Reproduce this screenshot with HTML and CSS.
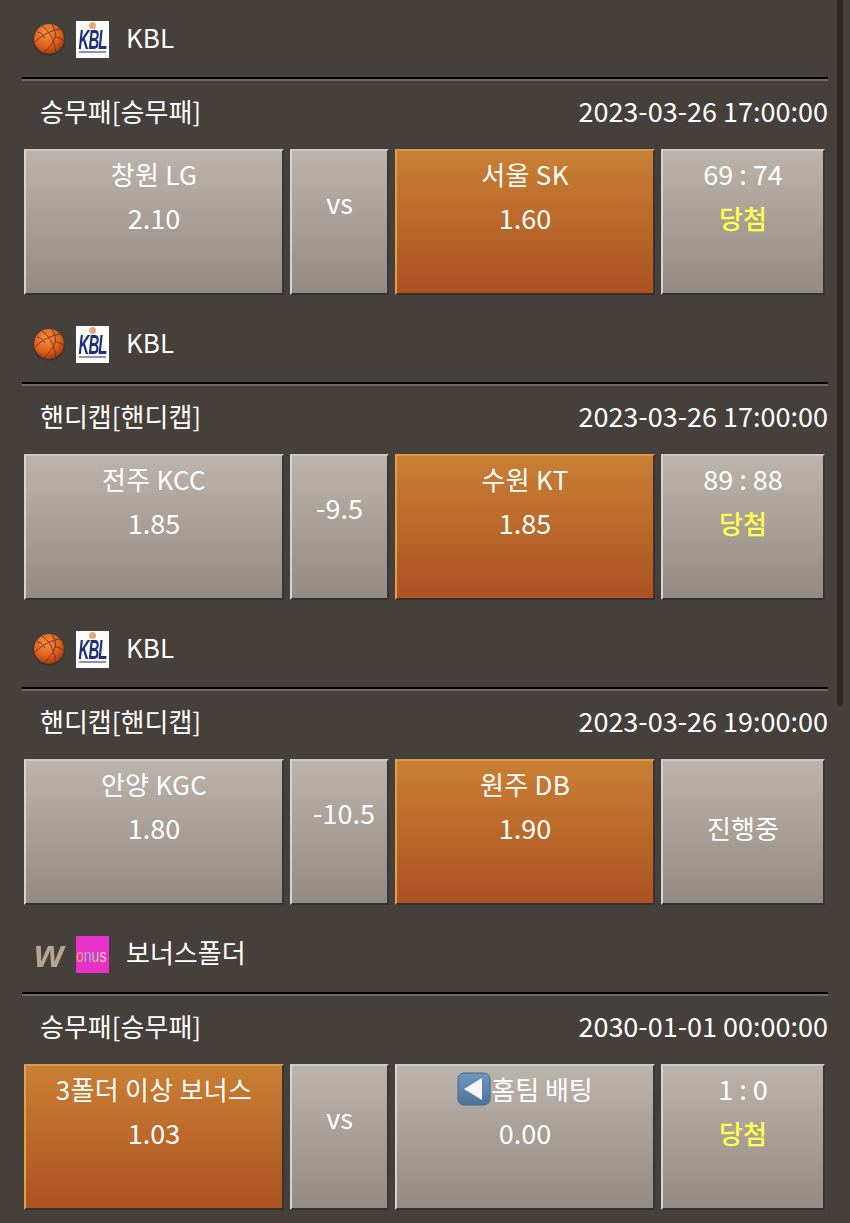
FILE: index.html
```html
<!DOCTYPE html>
<html lang="en">
<head>
    <meta charset="UTF-8">
    <meta name="viewport" content="width=device-width, initial-scale=1.0">
    <title>Betting history</title>
    <link rel="stylesheet" href="styles.css">
</head>
<body>
    <svg class="defs" width="0" height="0">
        <defs>
            <radialGradient id="ball" cx="42%" cy="32%" r="72%">
                <stop offset="0" stop-color="#f5914a"/>
                <stop offset="0.6" stop-color="#e0601c"/>
                <stop offset="1" stop-color="#96380f"/>
            </radialGradient>
            <linearGradient id="backfill" x1="0" y1="0" x2="0" y2="1">
                <stop offset="0" stop-color="#7097c0"/>
                <stop offset="1" stop-color="#4f719a"/>
            </linearGradient>
            <symbol id="basketball" viewBox="0 0 32 32">
                <circle cx="16" cy="16" r="15" fill="url(#ball)"/>
                <path d="M2 19C10 11 20 7 27 6M9 3c6 4 12 12 14 26M19 1.500c3 5 4 9 3 13s-5 10-11 15M4 9c3 0 6 2 8 6M22 14c3 0 6 1 9 4" fill="none" stroke="#6b3014" stroke-width="0.9"/>
            </symbol>
        </defs>
    </svg>

    <div class="scrollbar"></div>

    <section class="game">
        <div class="league">
            <svg class="sport"><use href="#basketball"/></svg>
            <div class="logo kbl"><span class="kbl-dot"></span><span class="kbl-text">KBL</span><span class="kbl-bar"></span></div>
            <span class="league-name">KBL</span>
        </div>
        <div class="info"><span>승무패[승무패]</span><span class="num">2023-03-26 17:00:00</span></div>
        <div class="odds">
            <div class="btn"><p class="team">창원 LG</p><p class="num">2.10</p></div>
            <div class="btn"><p class="mid">vs</p></div>
            <div class="btn picked"><p class="team">서울 SK</p><p class="num">1.60</p></div>
            <div class="btn"><p class="num">69 : 74</p><p class="win">당첨</p></div>
        </div>
    </section>

    <section class="game">
        <div class="league">
            <svg class="sport"><use href="#basketball"/></svg>
            <div class="logo kbl"><span class="kbl-dot"></span><span class="kbl-text">KBL</span><span class="kbl-bar"></span></div>
            <span class="league-name">KBL</span>
        </div>
        <div class="info"><span>핸디캡[핸디캡]</span><span class="num">2023-03-26 17:00:00</span></div>
        <div class="odds">
            <div class="btn"><p class="team">전주 KCC</p><p class="num">1.85</p></div>
            <div class="btn"><p class="mid">-9.5</p></div>
            <div class="btn picked"><p class="team">수원 KT</p><p class="num">1.85</p></div>
            <div class="btn"><p class="num">89 : 88</p><p class="win">당첨</p></div>
        </div>
    </section>

    <section class="game">
        <div class="league">
            <svg class="sport"><use href="#basketball"/></svg>
            <div class="logo kbl"><span class="kbl-dot"></span><span class="kbl-text">KBL</span><span class="kbl-bar"></span></div>
            <span class="league-name">KBL</span>
        </div>
        <div class="info"><span>핸디캡[핸디캡]</span><span class="num">2023-03-26 19:00:00</span></div>
        <div class="odds">
            <div class="btn"><p class="team">안양 KGC</p><p class="num">1.80</p></div>
            <div class="btn"><p class="mid mid-wide">-10.5</p></div>
            <div class="btn picked"><p class="team">원주 DB</p><p class="num">1.90</p></div>
            <div class="btn center"><p>진행중</p></div>
        </div>
    </section>

    <section class="game">
        <div class="league">
            <span class="sport w-mark">w</span>
            <div class="logo bonus"><span class="c1">o</span><span class="c2">n</span><span class="c3">u</span><span class="c4">s</span></div>
            <span class="league-name">보너스폴더</span>
        </div>
        <div class="info"><span>승무패[승무패]</span><span class="num">2030-01-01 00:00:00</span></div>
        <div class="odds">
            <div class="btn picked"><p class="team">3폴더 이상 보너스</p><p class="num">1.03</p></div>
            <div class="btn"><p class="mid">vs</p></div>
            <div class="btn"><p class="home">
                <svg class="back" viewBox="0 0 34 34"><rect x="1" y="1" width="32" height="32" rx="6" fill="url(#backfill)" stroke="#46658c"/><path d="M25 6v22L7 17z" fill="#f4f6f8"/></svg>홈팀 배팅</p><p class="num">0.00</p></div>
            <div class="btn"><p class="num">1 : 0</p><p class="win">당첨</p></div>
        </div>
    </section>
</body>
</html>
```
FILE: styles.css
```css
body {
    margin: 0;
    height: 1223px;
    overflow: hidden;
    position: relative;
    background-color: #45403b;
    color: #fff;
    font-family: "Noto Sans CJK KR", "Noto Sans", sans-serif;
    font-size: 26px;
}
p {
    margin: 0;
}
.defs {
    position: absolute;
}
.scrollbar {
    position: absolute;
    top: -10px;
    left: 837px;
    width: 6px;
    height: 716px;
    border-radius: 3px;
    background-color: #2d2925;
}
.game {
    height: 305px;
    padding: 0 22px;
    box-sizing: border-box;
    width: 850px;
}
.league {
    height: 77px;
    display: flex;
    align-items: center;
    box-sizing: border-box;
    padding-left: 11px;
}
.sport {
    width: 32px;
    height: 32px;
    margin-right: 11px;
    flex-shrink: 0;
    filter: drop-shadow(0 1px 1px rgba(0,0,0,0.4));
}
.w-mark {
    font-family: "Liberation Sans", sans-serif;
    font-weight: bold;
    font-style: italic;
    font-size: 38px;
    line-height: 32px;
    color: #b9a68f;
    text-align: center;
    filter: blur(0.7px);
}
.logo {
    width: 33px;
    height: 37px;
    flex-shrink: 0;
    overflow: hidden;
    margin: 2px 17px 0 0;
}
.kbl {
    background-color: #fdfdfd;
    display: flex;
    flex-direction: column;
    align-items: center;
}
.kbl-dot {
    width: 7px;
    height: 7px;
    margin-top: 1px;
    border-radius: 50%;
    background-color: #e9a878;
    filter: blur(0.5px);
}
.kbl-text {
    font-family: "Liberation Sans", sans-serif;
    font-weight: bold;
    font-style: italic;
    font-size: 15px;
    line-height: 20px;
    letter-spacing: -1px;
    color: #1c2f78;
    transform: scaleY(1.9);
    filter: blur(0.3px);
}
.kbl-bar {
    width: 27px;
    height: 2px;
    margin-top: 2px;
    background-color: #8c94b4;
}
.bonus {
    background-color: #e930c8;
    display: flex;
    align-items: center;
    font-family: "Liberation Sans", sans-serif;
    font-size: 14px;
    line-height: 1;
}
.bonus span {
    transform: scaleY(1.3);
}
.bonus .c1 {
    color: #e8b04a;
}
.bonus .c2 {
    color: #9ab8ee;
}
.bonus .c3 {
    color: #a6d890;
}
.bonus .c4 {
    color: #f0d8b0;
}
.league-name {
    line-height: 1;
    margin-bottom: 3px;
}
.info {
    border-top: 2px solid #000;
    box-shadow: inset 0 2px 0 #6f6b66;
    height: 72px;
    box-sizing: border-box;
    display: flex;
    justify-content: space-between;
    align-items: center;
    padding: 0 0 7px 18px;
    line-height: 1;
}
.odds {
    display: grid;
    grid-template-columns: 260px 99px 260px 164px;
    gap: 6px;
    margin-left: 2px;
}
.btn {
    height: 146px;
    box-sizing: border-box;
    padding-top: 1px;
    text-align: center;
    background: linear-gradient(#bcb3ab, #938a81);
    border-top: 2px solid #cfc8c1;
    border-left: 2px solid #d8d3ce;
    border-right: 2px solid #3a3530;
    border-bottom: 2px solid #36312c;
    line-height: 44px;
}
.picked {
    background: linear-gradient(#c97f34, #ad5222);
    border-top-color: #d99a4c;
    border-left-color: #e3a13f;
}
.num {
    font-size: 27px;
}
.team {
    letter-spacing: 0.3px;
}
.mid {
    padding-top: 29px;
    font-size: 27px;
}
.mid-wide {
    padding-left: 9px;
}
.center {
    display: flex;
    align-items: center;
    justify-content: center;
    padding: 0 0 8px;
}
.win {
    color: #ffff4d;
    font-weight: 500;
}
.home {
    display: flex;
    justify-content: center;
    align-items: center;
}
.back {
    width: 34px;
    height: 34px;
}
```
